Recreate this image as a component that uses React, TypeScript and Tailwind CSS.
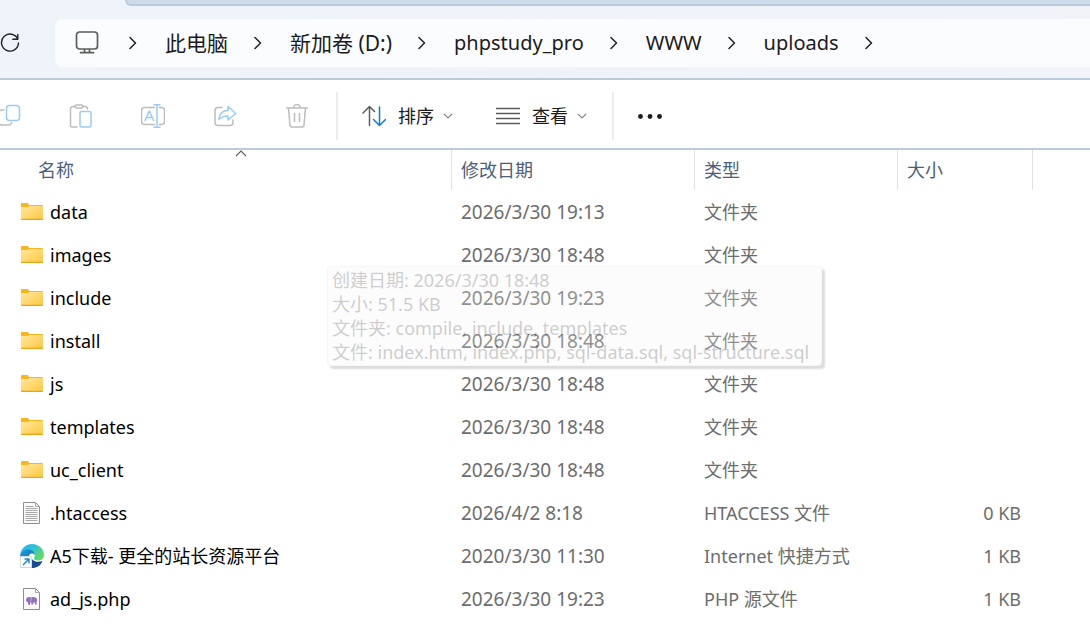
import clsx from "clsx";
import type { ReactNode } from "react";

type FileKind = "folder" | "text" | "edge" | "php";

type FileRow = {
  name: string;
  date: string;
  type: string;
  size?: string;
  kind: FileKind;
};

const crumbs = [
  { label: "此电脑", latin: false },
  { label: "新加卷 (D:)", latin: false },
  { label: "phpstudy_pro", latin: true },
  { label: "WWW", latin: true },
  { label: "uploads", latin: true },
];

const files: FileRow[] = [
  { name: "data", date: "2026/3/30 19:13", type: "文件夹", kind: "folder" },
  { name: "images", date: "2026/3/30 18:48", type: "文件夹", kind: "folder" },
  { name: "include", date: "2026/3/30 19:23", type: "文件夹", kind: "folder" },
  { name: "install", date: "2026/3/30 18:48", type: "文件夹", kind: "folder" },
  { name: "js", date: "2026/3/30 18:48", type: "文件夹", kind: "folder" },
  { name: "templates", date: "2026/3/30 18:48", type: "文件夹", kind: "folder" },
  { name: "uc_client", date: "2026/3/30 18:48", type: "文件夹", kind: "folder" },
  { name: ".htaccess", date: "2026/4/2 8:18", type: "HTACCESS 文件", size: "0 KB", kind: "text" },
  { name: "A5下载- 更全的站长资源平台", date: "2020/3/30 11:30", type: "Internet 快捷方式", size: "1 KB", kind: "edge" },
  { name: "ad_js.php", date: "2026/3/30 19:23", type: "PHP 源文件", size: "1 KB", kind: "php" },
];

function Icon({ children }: { children: ReactNode }) {
  return (
    <svg width="24" height="24" viewBox="0 0 24 24" fill="none" strokeWidth="1.5" strokeLinecap="round" strokeLinejoin="round" aria-hidden="true" className="shrink-0">
      {children}
    </svg>
  );
}

function CrumbArrow() {
  return (
    <svg width="8" height="14" viewBox="0 0 8 14" fill="none" stroke="#222" strokeWidth="1.5" strokeLinecap="round" strokeLinejoin="round" aria-hidden="true" className="shrink-0">
      <path d="M1 1.5 6.5 7 1 12.5" />
    </svg>
  );
}

function SmallChevron() {
  return (
    <svg width="10" height="6" viewBox="0 0 10 6" fill="none" stroke="#858585" strokeWidth="1.1" aria-hidden="true">
      <path d="M1 1 5 5 9 1" />
    </svg>
  );
}

function FileIcon({ kind }: { kind: FileKind }) {
  if (kind === "folder") {
    return (
      <svg width="24" height="24" viewBox="0 0 24 24" aria-hidden="true">
        <defs>
          <linearGradient id="folder" x1="0" y1="0" x2="1" y2="1">
            <stop offset="0" stopColor="#ffe7a2" />
            <stop offset="1" stopColor="#ffc83c" />
          </linearGradient>
        </defs>
        <path d="M1 4a1 1 0 0 1 1-1h6l1 2h13a1 1 0 0 1 1 1v3H1z" fill="#f9b51c" />
        <path d="M1 7h7l1.500-1H23v13a1 1 0 0 1-1 1H2a1 1 0 0 1-1-1z" fill="url(#folder)" />
        <path d="M1 18.800V19a1 1 0 0 0 1 1h20a1 1 0 0 0 1-1v-.2z" fill="#e9a41c" />
      </svg>
    );
  }
  if (kind === "edge") {
    return (
      <svg width="24" height="24" viewBox="0 0 24 24" aria-hidden="true">
        <defs>
          <linearGradient id="edgeTop" x1="0" y1="0" x2="1" y2=".5">
            <stop offset="0" stopColor="#2bb5ea" />
            <stop offset=".55" stopColor="#31c1d9" />
            <stop offset="1" stopColor="#5fdb62" />
          </linearGradient>
          <linearGradient id="edgeSide" x1="0" y1="0" x2="1" y2="1">
            <stop offset="0" stopColor="#1c9de0" />
            <stop offset="1" stopColor="#0f62ad" />
          </linearGradient>
        </defs>
        <path d="M.2 11C1 4 6 0 12 0c7 0 12 5 12 11 0 3.500-2.600 5.500-6 5.500-2.400 0-4-1-4-2 0-.8.8-1.200.8-3C14.800 9 12 6.500 8 6.500c-4 0-7 2-7.800 4.500z" fill="url(#edgeTop)" />
        <path d="M0 12c.5-4 4-6.500 8-6.500 4 0 6.800 2.500 6.800 5.500C14 9.500 12 9.300 11 9.600 9 10.500 8 13 8.500 16c.6 3.500 3 6 6.500 7.200C7 25 0 20 0 12z" fill="url(#edgeSide)" />
        <path d="M11 13c1 4 6 6 11.500 4-1.500 4.500-6 7-10.500 7z" fill="#134c96" />
        <path d="M.5 12.500h11v11H.5z" fill="#fff" stroke="#d3dbe3" />
        <path d="M3 21 8.500 15.500M4.500 15H9v4.500" fill="none" stroke="#1684d8" strokeWidth="1.400" />
      </svg>
    );
  }
  return (
    <svg width="24" height="24" viewBox="0 0 24 24" fill="none" aria-hidden="true">
      <path d="M3.500 1.500h12l4 4v17h-16z" fill="#fafafa" stroke="#8e8e8e" />
      <path d="M15.500 1.500v4h4" stroke="#a5a5a5" />
      {kind === "text" ? (
        <path d="M5.500 5.500h8M5.500 7.500h12M5.500 9.500h12M5.500 11.500h12M5.500 13.500h12M5.500 15.500h12M5.500 17.500h12M5.500 19.500h12" stroke="#a8a8a8" />
      ) : (
        <>
          <path d="M6 12.500c.2-1.600 1.400-2.500 3-2.500 1 0 1.600.3 2.200.5 1.800-.7 5.800-.8 6 2.700 0 1-.3 1.300-.6 1.500V17.500h-1.800v-2h-1.600v2H11.400V15.500l-1.400.3V18H8.400l-.4-2.500C6.800 15 6 14 6 12.500z" fill="#9273b8" />
          <path d="M10.800 11c.8 1.500.5 2.800-.6 3.500" stroke="#cdbbe2" strokeWidth=".7" />
        </>
      )}
    </svg>
  );
}

function ToolButton({ label, children }: { label: string; children: ReactNode }) {
  return (
    <button type="button" aria-label={label} className="flex h-12 w-[72px] shrink-0 items-center justify-center">
      <Icon>{children}</Icon>
    </button>
  );
}

function AddressBar() {
  return (
    <header className="flex flex-col border-b-2 border-[#bccbdb] bg-linear-to-r from-[#eef4f9] to-[#f1f3f9]">
      {/* bottom edge of the tab above */}
      <div className="ml-[125px] h-[6px] rounded-bl-md border-b-2 border-l-2 border-[#bccbdb] bg-[#cddcea]" />
      <div className="mt-[13px] mb-[11px] flex items-center">
        <button type="button" aria-label="刷新" className="w-[55px] shrink-0">
          <svg width="20" height="20" viewBox="0 0 20 20" fill="none" stroke="#222" strokeWidth="1.4" strokeLinecap="round" strokeLinejoin="round" aria-hidden="true">
            <path d="M17.800 6.200A8.500 8.500 0 1 0 18.500 10M17.800 1.500v4.700h-5" />
          </svg>
        </button>
        <nav aria-label="路径" className="flex h-12 min-w-0 grow items-center overflow-hidden rounded-l-lg bg-[#fbfcfe] pl-5">
          <svg width="24" height="24" viewBox="0 0 24 24" fill="none" stroke="#5c5c5c" strokeWidth="1.7" strokeLinecap="round" strokeLinejoin="round" aria-hidden="true" className="shrink-0">
            <rect x="1.500" y="1" width="21" height="17" rx="3" />
            <path d="M9.500 18.500v3M14.500 18.500v3M5.500 21.700h13" />
          </svg>
          <ol className="flex items-center pl-[30px]">
            <li className="flex">
              <CrumbArrow />
            </li>
            {crumbs.map(({ label, latin }) => (
              <li
                key={label}
                className={clsx(
                  "flex items-center gap-[26px] pl-7 leading-7 whitespace-nowrap text-[#1b1b1b]",
                  latin ? "text-xl" : "text-[21px]",
                )}
              >
                <a href="#">{label}</a>
                <CrumbArrow />
              </li>
            ))}
          </ol>
        </nav>
      </div>
    </header>
  );
}

function Toolbar() {
  return (
    <div className="flex h-[70px] items-center overflow-hidden border-b-2 border-[#bccbdb] pt-1">
      <div className="-ml-[27px] flex">
        <ToolButton label="复制">
          <path d="M7 6H4.500a3 3 0 0 0-3 3v9a3 3 0 0 0 3 3h7a3 3 0 0 0 3-2.500" stroke="#bdbdbd" />
          <rect x="9.500" y="1.500" width="13" height="15" rx="3" stroke="#9bcdf3" />
        </ToolButton>
        <ToolButton label="粘贴">
          <path d="M6 2.500H4A2.500 2.500 0 0 0 1.500 5v16A1.500 1.500 0 0 0 3 23h5M14 2.500h2a2.500 2.500 0 0 1 2.500 2.500" stroke="#bdbdbd" />
          <rect x="6" y="1" width="8" height="3" rx="1.500" stroke="#bdbdbd" />
          <rect x="11" y="7.500" width="11" height="15.500" rx="1.500" stroke="#9bcdf3" />
        </ToolButton>
        <ToolButton label="重命名">
          <path d="M13.500 3.500H3.500a3 3 0 0 0-3 3v11a3 3 0 0 0 3 3h10M18.500 3.500h2a3 3 0 0 1 3 3v11a3 3 0 0 1-3 3h-2" stroke="#bdbdbd" />
          <path d="M13 .8h6M13 23.200h6M16 .8v22.400M4 16.500 8.300 7l4.300 9.500M5.500 13.500h5.600" stroke="#9bcdf3" />
        </ToolButton>
        <ToolButton label="共享">
          <path d="M9 3.500H5a3 3 0 0 0-3 3v12a3 3 0 0 0 3 3h12a3 3 0 0 0 3-3V16" stroke="#bdbdbd" />
          <path d="M15 2.500 22.800 9.500 15 16v-4c-4 0-6.500 1-9 3.500.3-5.500 3.500-9 9-9z" stroke="#9bcdf3" />
        </ToolButton>
        <ToolButton label="删除">
          <path d="M1.500 4h21M8.500 4a3.500 3.500 0 0 1 7 0M3.500 4l1.500 17a2 2 0 0 0 2 2h10a2 2 0 0 0 2-2l1.500-17M9.500 9.500v8M14.500 9.500v8" stroke="#bdbdbd" />
        </ToolButton>
      </div>
      <div className="ml-[3px] h-12 w-[2px] shrink-0 bg-[#ededed]" />
      <button type="button" className="ml-6 flex shrink-0 items-center gap-3 text-lg text-[#1b1b1b]">
        <Icon>
          <path d="M7.500 21.500V3M1 9l6.500-6.500L12.500 7.500" stroke="#5c5c5c" />
          <path d="M17.500 3v18M11.500 15.500l6 6 6-6" stroke="#0f7bd6" />
        </Icon>
        <span className="flex items-center gap-[9px]">
          排序
          <SmallChevron />
        </span>
      </button>
      <button type="button" className="ml-[43px] flex shrink-0 items-center gap-3 text-lg text-[#1b1b1b]">
        <Icon>
          <path d="M0 4.500h24M0 9.500h24M0 14.500h24M0 19.500h24" stroke="#5c5c5c" strokeWidth="1.3" strokeLinecap="butt" />
        </Icon>
        <span className="flex items-center gap-[9px]">
          查看
          <SmallChevron />
        </span>
      </button>
      <div className="ml-[25px] h-12 w-[2px] shrink-0 bg-[#ededed]" />
      <button type="button" aria-label="查看更多" className="ml-6 shrink-0">
        <Icon>
          <g fill="#1b1b1b">
            <circle cx="2.500" cy="12.500" r="2.400" />
            <circle cx="12" cy="12.500" r="2.400" />
            <circle cx="21.500" cy="12.500" r="2.400" />
          </g>
        </Icon>
      </button>
    </div>
  );
}

function FileTable() {
  return (
    <table className="w-full table-fixed border-separate border-spacing-0 text-left whitespace-nowrap">
      <colgroup>
        <col className="w-[452px]" />
        <col className="w-[243px]" />
        <col className="w-[203px]" />
        <col className="w-[135px]" />
        <col />
      </colgroup>
      <thead>
        <tr className="h-10 text-lg text-[#4c607a]">
          <th scope="col" aria-sort="ascending" className="border-r border-[#e2e2e2] p-0 pl-[30px] font-normal">
            <div className="relative pl-2">
              名称
              <svg width="12" height="7" viewBox="0 0 12 7" fill="none" stroke="#5c5c5c" strokeWidth="1.1" aria-hidden="true" className="absolute -top-1.5 left-1/2 -translate-x-1/2">
                <path d="M1 6 6 1l5 5" />
              </svg>
            </div>
          </th>
          <th scope="col" className="border-r border-[#e2e2e2] p-0 pl-[9px] font-normal">修改日期</th>
          <th scope="col" className="border-r border-[#e2e2e2] p-0 pl-[9px] font-normal">类型</th>
          <th scope="col" className="border-r border-[#e2e2e2] p-0 pl-[9px] font-normal">大小</th>
          <td />
        </tr>
      </thead>
      <tbody>
        {files.map((file) => (
          <tr key={file.name} className="h-[43px] text-lg text-[#6d6d6d]">
            <td className="p-0 pl-5">
              <div className="flex items-center gap-[6px] text-black">
                <FileIcon kind={file.kind} />
                {file.name}
              </div>
            </td>
            <td className="p-0 pt-0.5 pl-[9px] text-[19px]">{file.date}</td>
            <td className="p-0 pl-[9px]">{file.type}</td>
            <td className="p-0 pr-3 text-right">{file.size}</td>
            <td />
          </tr>
        ))}
      </tbody>
    </table>
  );
}

export default function App() {
  return (
    <div className="min-h-screen overflow-hidden bg-white font-['Noto_Sans','Noto_Sans_CJK_SC',sans-serif]">
      <AddressBar />
      <Toolbar />
      <main className="relative">
        <FileTable />
        {/* tooltip while it fades out */}
        <div role="tooltip" className="absolute top-[116px] left-[327px] rounded-sm border border-[#dcdcdc] bg-[#f7f7f7] py-px pr-3 pl-1 text-lg leading-6 whitespace-nowrap text-[#3c3c3c] opacity-25 shadow-[3px_3px_2px_#777]">
          <p>创建日期: 2026/3/30 18:48</p>
          <p>大小: 51.5 KB</p>
          <p>文件夹: compile, include, templates</p>
          <p>文件: index.htm, index.php, sql-data.sql, sql-structure.sql</p>
        </div>
      </main>
    </div>
  );
}
